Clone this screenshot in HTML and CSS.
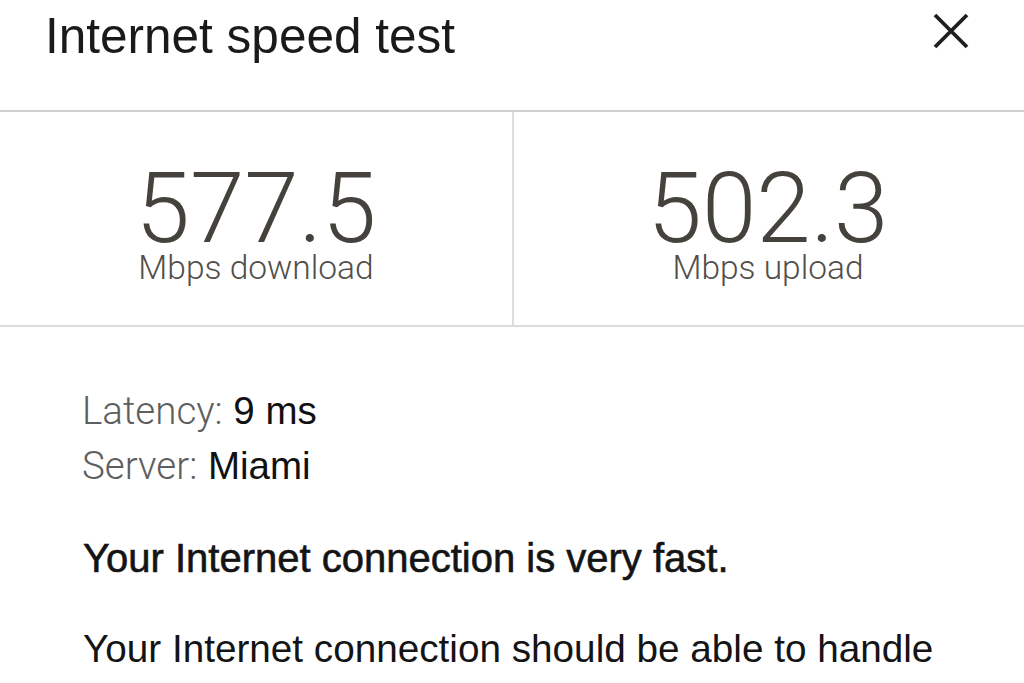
FILE: index.html
```html
<!DOCTYPE html>
<html lang="en">
<head>
<meta charset="utf-8">
<title>Internet speed test</title>
<link rel="stylesheet" href="styles.css">
</head>
<body>
<div class="dialog">
  <header class="header">
    <h1 class="title">Internet speed test</h1>
    <button class="close" aria-label="Close">
      <svg width="36" height="36" viewBox="0 0 36 36" aria-hidden="true">
        <path d="M2 2 L34 34 M34 2 L2 34" stroke="#1e1e1e" stroke-width="3.8" stroke-linecap="butt" fill="none"/>
      </svg>
    </button>
  </header>
  <section class="stats">
    <div class="stat stat-left">
      <div class="stat-value">577.5</div>
      <div class="stat-label">Mbps download</div>
    </div>
    <div class="stat">
      <div class="stat-value">502.3</div>
      <div class="stat-label">Mbps upload</div>
    </div>
  </section>
  <section class="details">
    <div class="info-line"><span class="info-key">Latency:</span> <span class="info-val">9 ms</span></div>
    <div class="info-line"><span class="info-key">Server:</span> <span class="info-val">Miami</span></div>
    <p class="verdict">Your Internet connection is very fast.</p>
    <p class="desc">Your Internet connection should be able to handle</p>
  </section>
</div>
</body>
</html>
```
FILE: styles.css
```css
html, body {
  margin: 0;
  padding: 0;
  background: #ffffff;
  overflow: hidden;
}

.dialog {
  width: 1024px;
  height: 683px;
  font-family: "Liberation Sans", Arial, Helvetica, sans-serif;
  color: #111;
}

.header {
  display: flex;
  justify-content: space-between;
  align-items: flex-start;
  height: 104px;
  padding: 6px 55px 0 45px;
  border-bottom: 2px solid #cfcfcf;
}

.title {
  margin: 0;
  font-size: 49.5px;
  line-height: 60px;
  font-weight: normal;
  color: #1a1a1a;
}

.close {
  margin-top: 7px;
  padding: 0;
  border: 0;
  background: none;
  width: 36px;
  height: 36px;
  display: block;
}

.close svg {
  display: block;
}

.stats {
  display: grid;
  grid-template-columns: 512px 1fr;
  height: 213px;
  border-bottom: 2px solid #dcdcdc;
}

.stat {
  display: flex;
  flex-direction: column;
  align-items: center;
  padding-top: 57px;
}

.stat-left {
  border-right: 2px solid #dedede;
  margin-right: -2px;
}

.stat-value {
  font-family: Roboto, "Liberation Sans", sans-serif;
  font-weight: 300;
  font-size: 98px;
  line-height: 80px;
  color: #45413d;
}

.stat-label {
  font-family: Roboto, "Liberation Sans", sans-serif;
  font-weight: 300;
  font-size: 33.5px;
  line-height: 38px;
  color: #524e4a;
}

.details {
  padding: 56px 0 0 82px;
}

.info-line {
  font-size: 38.5px;
  line-height: 55px;
}

.info-key {
  font-family: Roboto, "Liberation Sans", sans-serif;
  font-weight: 300;
  color: #5e5e5e;
}

.info-val {
  color: #111;
}

.verdict {
  margin: 41px 0 0 1px;
  font-size: 40px;
  line-height: 48px;
  color: #141414;
  -webkit-text-stroke: 0.6px #141414;
}

.desc {
  margin: 43px 0 0 1px;
  font-size: 38.7px;
  line-height: 48px;
  color: #141414;
}
```
